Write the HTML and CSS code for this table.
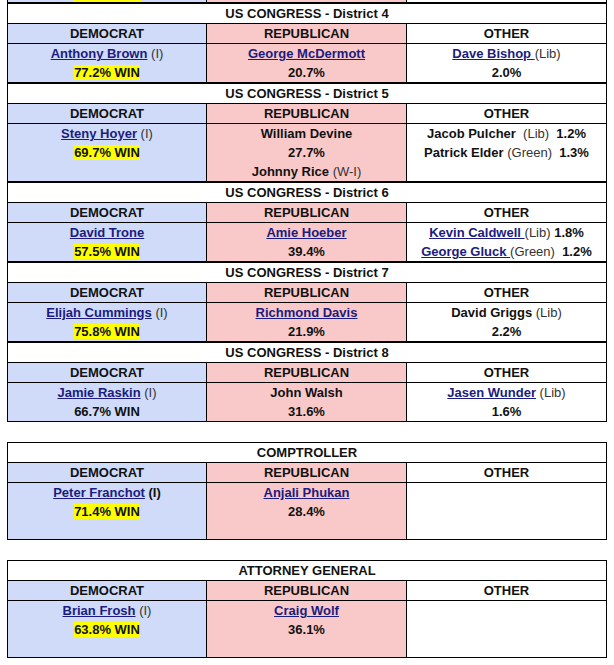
FILE: index.html
```html
<!DOCTYPE html>
<html>
<head>
<meta charset="utf-8">
<link rel="stylesheet" href="styles.css">
</head>
<body>
<div class="page">
<table class="race">
  <colgroup><col class="c1"><col class="c2"><col class="c3"></colgroup>
  <tr class="stub"><td class="dem"><span class="stub-hl"></span></td><td class="rep"></td><td class="oth"></td></tr>
  <tr class="title sep"><td colspan="3">US CONGRESS - District 4</td></tr>
  <tr class="heads"><td class="dem">DEMOCRAT</td><td class="rep">REPUBLICAN</td><td class="oth">OTHER</td></tr>
  <tr class="res">
    <td class="dem"><div><a href="#">Anthony Brown</a> <span class="pty">(I)</span></div><div><span class="win">77.2% WIN</span></div></td>
    <td class="rep"><div><a href="#">George McDermott</a></div><div>20.7%</div></td>
    <td class="oth"><div><a href="#">Dave Bishop </a> <span class="pty">(Lib)</span></div><div>2.0%</div></td>
  </tr>
  <tr class="title sep"><td colspan="3">US CONGRESS - District 5</td></tr>
  <tr class="heads"><td class="dem">DEMOCRAT</td><td class="rep">REPUBLICAN</td><td class="oth">OTHER</td></tr>
  <tr class="res">
    <td class="dem"><div><a href="#">Steny Hoyer</a> <span class="pty">(I)</span></div><div><span class="win">69.7% WIN</span></div></td>
    <td class="rep"><div>William Devine</div><div>27.7%</div><div>Johnny Rice <span class="pty">(W-I)</span></div></td>
    <td class="oth"><div>Jacob Pulcher&nbsp; <span class="pty">(Lib)</span>&nbsp; 1.2%</div><div>Patrick Elder <span class="pty">(Green)</span>&nbsp; 1.3%</div></td>
  </tr>
  <tr class="title sep"><td colspan="3">US CONGRESS - District 6</td></tr>
  <tr class="heads"><td class="dem">DEMOCRAT</td><td class="rep">REPUBLICAN</td><td class="oth">OTHER</td></tr>
  <tr class="res">
    <td class="dem"><div><a href="#">David Trone</a></div><div><span class="win">57.5% WIN</span></div></td>
    <td class="rep"><div><a href="#">Amie Hoeber</a></div><div>39.4%</div></td>
    <td class="oth"><div><a href="#">Kevin Caldwell </a> <span class="pty">(Lib)</span> 1.8%</div><div><a href="#">George Gluck </a> <span class="pty">(Green)</span>&nbsp; 1.2%</div></td>
  </tr>
  <tr class="title sep"><td colspan="3">US CONGRESS - District 7</td></tr>
  <tr class="heads"><td class="dem">DEMOCRAT</td><td class="rep">REPUBLICAN</td><td class="oth">OTHER</td></tr>
  <tr class="res">
    <td class="dem"><div><a href="#">Elijah Cummings</a> <span class="pty">(I)</span></div><div><span class="win">75.8% WIN</span></div></td>
    <td class="rep"><div><a href="#">Richmond Davis</a></div><div>21.9%</div></td>
    <td class="oth"><div>David Griggs <span class="pty">(Lib)</span></div><div>2.2%</div></td>
  </tr>
  <tr class="title sep"><td colspan="3">US CONGRESS - District 8</td></tr>
  <tr class="heads"><td class="dem">DEMOCRAT</td><td class="rep">REPUBLICAN</td><td class="oth">OTHER</td></tr>
  <tr class="res">
    <td class="dem"><div><a href="#">Jamie Raskin</a> <span class="pty">(I)</span></div><div>66.7% WIN</div></td>
    <td class="rep"><div>John Walsh</div><div>31.6%</div></td>
    <td class="oth"><div><a href="#">Jasen Wunder</a> <span class="pty">(Lib)</span></div><div>1.6%</div></td>
  </tr>
</table>

<table class="race">
  <colgroup><col class="c1"><col class="c2"><col class="c3"></colgroup>
  <tr class="title"><td colspan="3">COMPTROLLER</td></tr>
  <tr class="heads"><td class="dem">DEMOCRAT</td><td class="rep">REPUBLICAN</td><td class="oth">OTHER</td></tr>
  <tr class="res tall">
    <td class="dem"><div><a href="#">Peter Franchot</a> (I)</div><div><span class="win">71.4% WIN</span></div></td>
    <td class="rep"><div><a href="#">Anjali Phukan</a></div><div>28.4%</div></td>
    <td class="oth"></td>
  </tr>
</table>

<table class="race">
  <colgroup><col class="c1"><col class="c2"><col class="c3"></colgroup>
  <tr class="title"><td colspan="3">ATTORNEY GENERAL</td></tr>
  <tr class="heads"><td class="dem">DEMOCRAT</td><td class="rep">REPUBLICAN</td><td class="oth">OTHER</td></tr>
  <tr class="res tall">
    <td class="dem"><div><a href="#">Brian Frosh</a> <span class="pty">(I)</span></div><div><span class="win">63.8% WIN</span></div></td>
    <td class="rep"><div><a href="#">Craig Wolf</a></div><div>36.1%</div></td>
    <td class="oth"></td>
  </tr>
</table>
</div>
</body>
</html>
```

FILE: styles.css
```css
html, body {
  margin: 0;
  padding: 0;
  background: #ffffff;
}

.page {
  padding: 0 8px 0 7px;
  font-family: "Liberation Sans", Arial, sans-serif;
  font-size: 13px;
  font-weight: bold;
  color: #111111;
}

.race {
  width: 599px;
  border-collapse: collapse;
  table-layout: fixed;
  margin-bottom: 20px;
}

.c1 { width: 199px; }
.c2 { width: 200px; }
.c3 { width: 200px; }

.race td {
  border: 1px solid #000000;
  padding: 0;
  text-align: center;
  vertical-align: top;
  line-height: 19px;
}

.dem { background: #cfdbf8; }
.rep { background: #f9c9c9; }
.oth { background: #ffffff; }

.stub td {
  height: 2px;
  line-height: 0;
  font-size: 0;
  border-top: none;
}

.stub-hl {
  display: block;
  width: 68px;
  height: 2px;
  margin: 0 auto;
  background: #ffff00;
}

.title td {
  background: #ffffff;
}

.sep td {
  border-top: 2px solid #000000;
}

.res.tall td {
  height: 56px;
}

a {
  color: #1b1b80;
  text-decoration: underline;
}

.pty {
  font-weight: normal;
  color: #333333;
}

.win {
  background: #ffff00;
}
```
